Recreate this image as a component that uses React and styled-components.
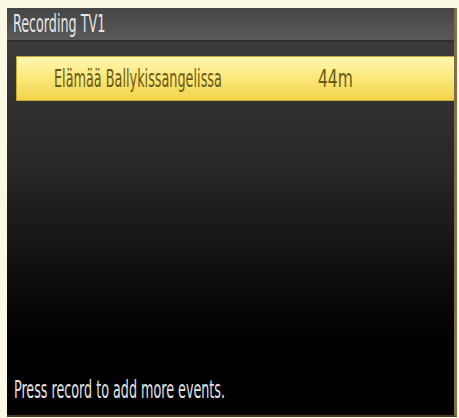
import React from "react";
import styled, { createGlobalStyle } from "styled-components";

const GlobalStyle = createGlobalStyle`
  html, body {
    margin: 0;
    padding: 0;
    background: #fbf8e4;
  }
`;

const Frame = styled.section`
  display: flex;
  flex-direction: column;
  box-sizing: border-box;
  width: 450px;
  height: 409px;
  margin: 8px 0 0 7px;
  background: #000;
  border-right: 3px solid #7d6f48;
  border-bottom: 2px solid #4a3a22;
  font-family: "Liberation Sans Narrow", "DejaVu Sans Condensed", "Liberation Sans", sans-serif;
  overflow: hidden;
`;

const Header = styled.header`
  display: flex;
  align-items: center;
  height: 32px;
  padding-left: 6px;
  background: linear-gradient(#454545, #5a5a5a);
  border-bottom: 2px solid #2f2f2f;
  flex: 0 0 auto;
`;

const Squeezed = styled.span`
  display: inline-block;
  white-space: nowrap;
  font-size: ${(p) => p.$size}px;
  color: ${(p) => p.$color};
  transform: scaleX(${(p) => p.$scale});
  transform-origin: left center;
`;

const Body = styled.div`
  display: flex;
  flex-direction: column;
  flex: 1;
  background: linear-gradient(#3b3b3b 0%, #262626 35%, #0c0c0c 65%, #000 80%);
`;

const Row = styled.div`
  display: flex;
  align-items: center;
  box-sizing: border-box;
  height: 45px;
  margin: 14px 0 0 9px;
  background: linear-gradient(#fff7b0 0%, #fbe77a 50%, #f2d349 100%);
  border: 1px solid #c8a830;
  border-right: none;
`;

const Title = styled.div`
  width: 264px;
  padding-left: 37px;
`;

const Duration = styled.div`
  flex: 1;
`;

const Footer = styled.div`
  margin-top: auto;
  padding: 0 0 11px 7px;
`;

export default function App() {
  return (
    <>
      <GlobalStyle />
      <Frame>
        <Header>
          <Squeezed $size={24} $scale={0.59} $color="#e6e6e6">
            Recording TV1
          </Squeezed>
        </Header>
        <Body>
          <Row>
            <Title>
              <Squeezed $size={25} $scale={0.57} $color="#6b5a14">
                Elämää Ballykissangelissa
              </Squeezed>
            </Title>
            <Duration>
              <Squeezed $size={25} $scale={0.69} $color="#6b5a14">
                44m
              </Squeezed>
            </Duration>
          </Row>
          <Footer>
            <Squeezed $size={24} $scale={0.59} $color="#e4e4e4">
              Press record to add more events.
            </Squeezed>
          </Footer>
        </Body>
      </Frame>
    </>
  );
}
